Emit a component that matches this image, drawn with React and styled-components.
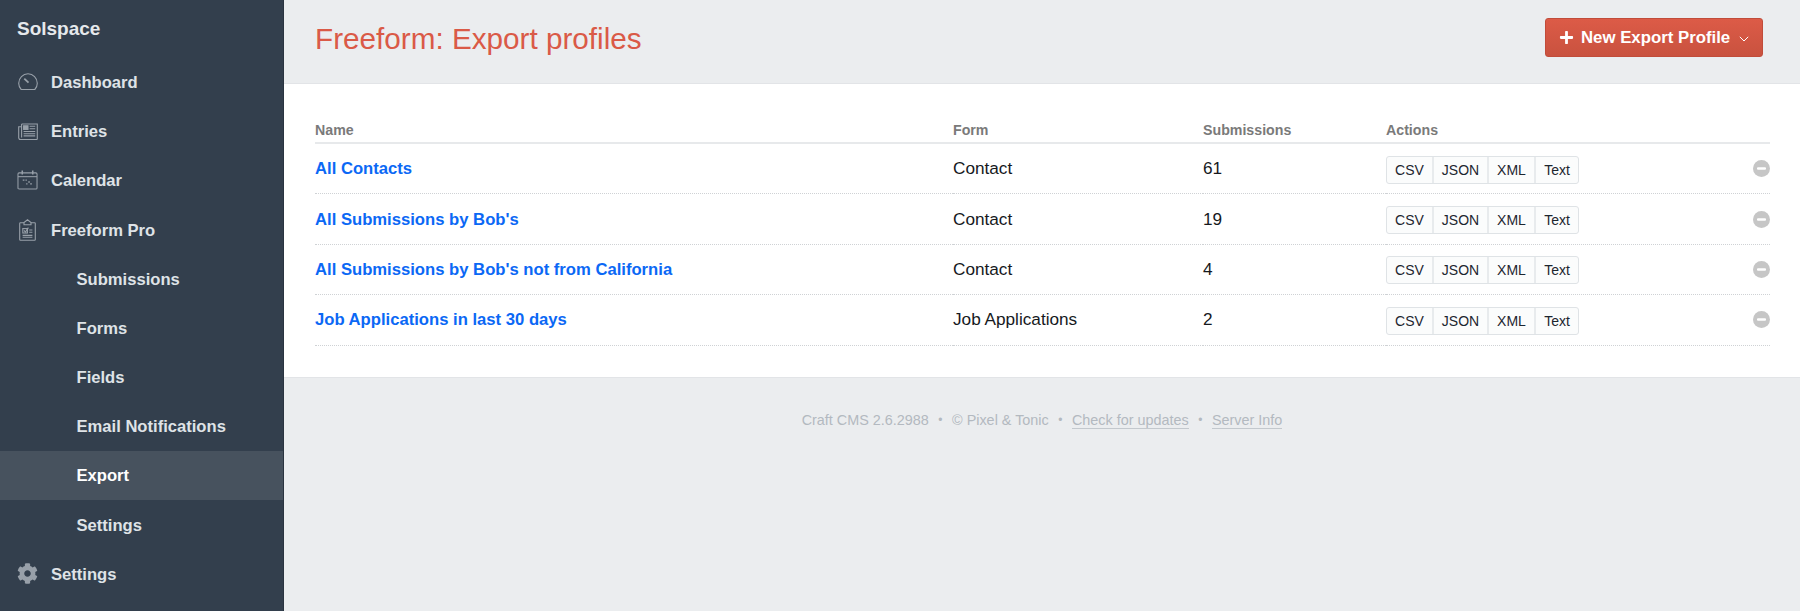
import React from "react";
import styled, { createGlobalStyle } from "styled-components";
import { FaCog, FaPlus } from "react-icons/fa";

const GlobalStyle = createGlobalStyle`
  html, body {
    margin: 0;
    height: 100%;
    overflow: hidden;
    background: #ebedef;
    font-family: "Liberation Sans", Arial, sans-serif;
  }
`;

const Shell = styled.div`
  display: flex;
  height: 611px;
`;

const Sidebar = styled.aside`
  width: 283px;
  flex-shrink: 0;
  background: #333f4d;
  border-right: 1px solid #2a3440;
`;

const Brand = styled.div`
  height: 57.4px;
  padding-left: 17px;
  display: flex;
  align-items: center;
  font-size: 19px;
  font-weight: 700;
  color: #e6e9ec;
`;

const NavList = styled.ul`
  list-style: none;
  margin: 0;
  padding: 0;
`;

const NavItem = styled.li`
  height: 49.2px;
  box-sizing: border-box;
  padding-top: 2px;
  display: flex;
  align-items: center;
  gap: 13px;
  padding-left: ${props => (props.sub ? "76.5px" : "17px")};
  font-size: 16.6px;
  font-weight: 700;
  color: ${props => (props.active ? "#ffffff" : "#dfe3e7")};
  background: ${props => (props.active ? "#47525e" : "transparent")};
`;

const NavIcon = styled.span`
  width: 21px;
  height: 22px;
  margin-top: -2px;
  color: #98a0a9;
  display: flex;
  align-items: center;
  justify-content: center;

  svg {
    flex-shrink: 0;
  }
`;

const Main = styled.main`
  flex: 1;
  min-width: 0;
`;

const Header = styled.header`
  height: 84px;
  box-sizing: border-box;
  padding: 18px 37px 0 31px;
  display: flex;
  justify-content: space-between;
  align-items: flex-start;
  border-bottom: 1px solid #e2e4e7;
`;

const Title = styled.h1`
  margin: 3px 0 0;
  font-size: 29.7px;
  line-height: 36px;
  font-weight: 400;
  color: #da5a47;
`;

const NewButton = styled.button`
  height: 39px;
  width: 218px;
  box-sizing: border-box;
  padding: 0 0 0 13px;
  display: flex;
  align-items: center;
  border: 1px solid #c14c3a;
  border-radius: 3px;
  background: linear-gradient(#dc5b47, #c9523f);
  color: #ffffff;
  font-family: inherit;
  font-size: 16.8px;
  font-weight: 700;
`;

const PlusIcon = styled(FaPlus)`
  width: 15px;
  height: 15px;
  margin-right: 7px;
`;

const Chevron = styled.svg`
  width: 10px;
  height: 6px;
  margin-left: 9px;
  margin-top: 2px;
`;

const Content = styled.section`
  background: #ffffff;
  height: 294px;
  box-sizing: border-box;
  padding: 36px 30px 0 31px;
  border-bottom: 1px solid #e2e4e7;
`;

const Table = styled.table`
  width: 100%;
  table-layout: fixed;
  border-collapse: separate;
  border-spacing: 0;
`;

const HeadCell = styled.th`
  width: ${props => props.width || "auto"};
  height: 24px;
  padding: 0 0 2px;
  box-sizing: border-box;
  text-align: left;
  font-size: 14.2px;
  font-weight: 700;
  color: #7a7a7a;
  border-bottom: 2px solid #e7e9eb;
`;

const Cell = styled.td`
  height: 50.4px;
  box-sizing: border-box;
  padding: 0;
  font-size: 17.2px;
  color: #16191d;
  border-bottom: 1px dotted #cfd2d5;
`;

const RowLink = styled.a`
  font-size: 16.65px;
  font-weight: 700;
  color: #0b68f5;
  text-decoration: none;
`;

const ActionRow = styled.div`
  display: flex;
  align-items: center;
  justify-content: space-between;
`;

const ButtonGroup = styled.div`
  display: flex;
  height: 28px;
  margin-top: 2px;
  border: 1px solid #dfe3e6;
  border-radius: 3px;
  box-sizing: border-box;
  background: #fbfcfc;
`;

const ExportButton = styled.span`
  width: ${props => props.size}px;
  box-sizing: border-box;
  display: flex;
  align-items: center;
  justify-content: center;
  font-size: 14px;
  color: #1d2630;
  & + & {
    border-left: 2px solid #e8ebed;
  }
`;

const RemoveIcon = styled.svg`
  width: 17px;
  height: 17px;
`;

const Footer = styled.footer`
  margin-top: 33px;
  display: flex;
  justify-content: center;
  align-items: center;
  font-size: 14.4px;
  line-height: 18px;
  color: #b3b9c0;
`;

const Dot = styled.span`
  margin: 0 9.5px;
  font-size: 12px;
`;

const FooterLink = styled.a`
  color: #b3b9c0;
  border-bottom: 1px solid #c3c8cd;
  line-height: 16px;
`;

const GaugeIcon = () => (
  <svg width="20" height="18" viewBox="0 0 20 18" fill="none" stroke="currentColor" strokeWidth="1.1">
    <path d="M3.2 16.5h13.6C18.2 15 19.3 12.8 19.3 10.3 19.3 5 15.1.8 10 .8S.7 5 .7 10.3c0 2.5 1.1 4.7 2.5 6.2z" />
    <path d="M6.3 5.7l4.2 4" strokeWidth="1.8" />
  </svg>
);

const NewsIcon = () => (
  <svg width="20" height="17" viewBox="0 0 20 17" fill="none" stroke="currentColor" strokeWidth="1.1">
    <path d="M3.6 1h15.7v14.8a.7.7 0 0 1-.7.7H2.4A1.7 1.7 0 0 1 .7 14.8V3.8h2.9" />
    <path d="M3.6 1v13.4" />
    <path d="M5.6 8.5h11.6M5.6 10.7h11.6M5.6 12.9h11.6M11.6 3.2h5.6M11.6 5.8h5.6" />
    <rect x="5.6" y="2.8" width="4.4" height="3.6" fill="currentColor" />
  </svg>
);

const CalendarIcon = () => (
  <svg width="21" height="20" viewBox="0 0 22 21" fill="none" stroke="currentColor" strokeWidth="1.1">
    <rect x="1" y="3" width="20" height="17" rx="1.2" />
    <path d="M1 7h20" />
    <path d="M5.5.6v4.2M16.5.6v4.2" strokeWidth="1.6" />
    <path d="M6 10.6h1.8M8.9 10.6h1.4M11.8 12.6h1.6M13.8 14.6h1.8M9.6 14.6h1.4" strokeWidth="1.5" />
  </svg>
);

const ClipboardIcon = () => (
  <svg width="17" height="22" viewBox="0 0 17 22" fill="none" stroke="currentColor" strokeWidth="1.1">
    <path d="M5 3.8H1.4a.7.7 0 0 0-.7.7v16.1c0 .4.3.7.7.7h14.2a.7.7 0 0 0 .7-.7V4.5a.7.7 0 0 0-.7-.7H12" />
    <path d="M5 5.8V3.6l3.5-2.8L12 3.6v2.2z" />
    <rect x="3.8" y="9.6" width="4.6" height="4.4" />
    <path d="M5 11.4l1.4 1.6 3-4.4M10.2 11h3.2M10.2 13.3h3.2M3.6 16.4h9.8M3.6 18.3h9.8" />
  </svg>
);

const SettingsIcon = styled(FaCog)`
  width: 21px;
  height: 21px;
`;

const mainItems = [
  { label: "Dashboard", icon: <GaugeIcon /> },
  { label: "Entries", icon: <NewsIcon /> },
  { label: "Calendar", icon: <CalendarIcon /> },
  { label: "Freeform Pro", icon: <ClipboardIcon /> },
];

const subItems = ["Submissions", "Forms", "Fields", "Email Notifications", "Export", "Settings"];

const profiles = [
  { name: "All Contacts", form: "Contact", count: 61 },
  { name: "All Submissions by Bob's", form: "Contact", count: 19 },
  { name: "All Submissions by Bob's not from California", form: "Contact", count: 4 },
  { name: "Job Applications in last 30 days", form: "Job Applications", count: 2 },
];

const formats = [
  { label: "CSV", size: 45 },
  { label: "JSON", size: 55 },
  { label: "XML", size: 47 },
  { label: "Text", size: 44 },
];

function App() {
  return (
    <Shell>
      <GlobalStyle />
      <Sidebar>
        <Brand>Solspace</Brand>
        <NavList>
          {mainItems.map(item => (
            <NavItem key={item.label}>
              <NavIcon>{item.icon}</NavIcon>
              {item.label}
            </NavItem>
          ))}
          {subItems.map(label => (
            <NavItem key={label} sub active={label === "Export"}>
              {label}
            </NavItem>
          ))}
          <NavItem>
            <NavIcon>
              <SettingsIcon />
            </NavIcon>
            Settings
          </NavItem>
        </NavList>
      </Sidebar>
      <Main>
        <Header>
          <Title>Freeform: Export profiles</Title>
          <NewButton>
            <PlusIcon />
            New Export Profile
            <Chevron viewBox="0 0 10 6" fill="none" stroke="#ffffff" strokeWidth="1">
              <path d="M.8.8L5 5l4.2-4.2" />
            </Chevron>
          </NewButton>
        </Header>
        <Content>
          <Table>
            <thead>
              <tr>
                <HeadCell width="638px">Name</HeadCell>
                <HeadCell width="250px">Form</HeadCell>
                <HeadCell width="183px">Submissions</HeadCell>
                <HeadCell>Actions</HeadCell>
              </tr>
            </thead>
            <tbody>
              {profiles.map(profile => (
                <tr key={profile.name}>
                  <Cell>
                    <RowLink>{profile.name}</RowLink>
                  </Cell>
                  <Cell>{profile.form}</Cell>
                  <Cell>{profile.count}</Cell>
                  <Cell>
                    <ActionRow>
                      <ButtonGroup>
                        {formats.map(format => (
                          <ExportButton key={format.label} size={format.size}>
                            {format.label}
                          </ExportButton>
                        ))}
                      </ButtonGroup>
                      <RemoveIcon viewBox="0 0 17 17">
                        <circle cx="8.5" cy="8.5" r="8.5" fill="#c6c6c6" />
                        <rect x="4" y="7.2" width="9" height="2.6" rx="1" fill="#ffffff" />
                      </RemoveIcon>
                    </ActionRow>
                  </Cell>
                </tr>
              ))}
            </tbody>
          </Table>
        </Content>
        <Footer>
          Craft CMS 2.6.2988
          <Dot>•</Dot>
          © Pixel &amp; Tonic
          <Dot>•</Dot>
          <FooterLink>Check for updates</FooterLink>
          <Dot>•</Dot>
          <FooterLink>Server Info</FooterLink>
        </Footer>
      </Main>
    </Shell>
  );
}

export default App;
